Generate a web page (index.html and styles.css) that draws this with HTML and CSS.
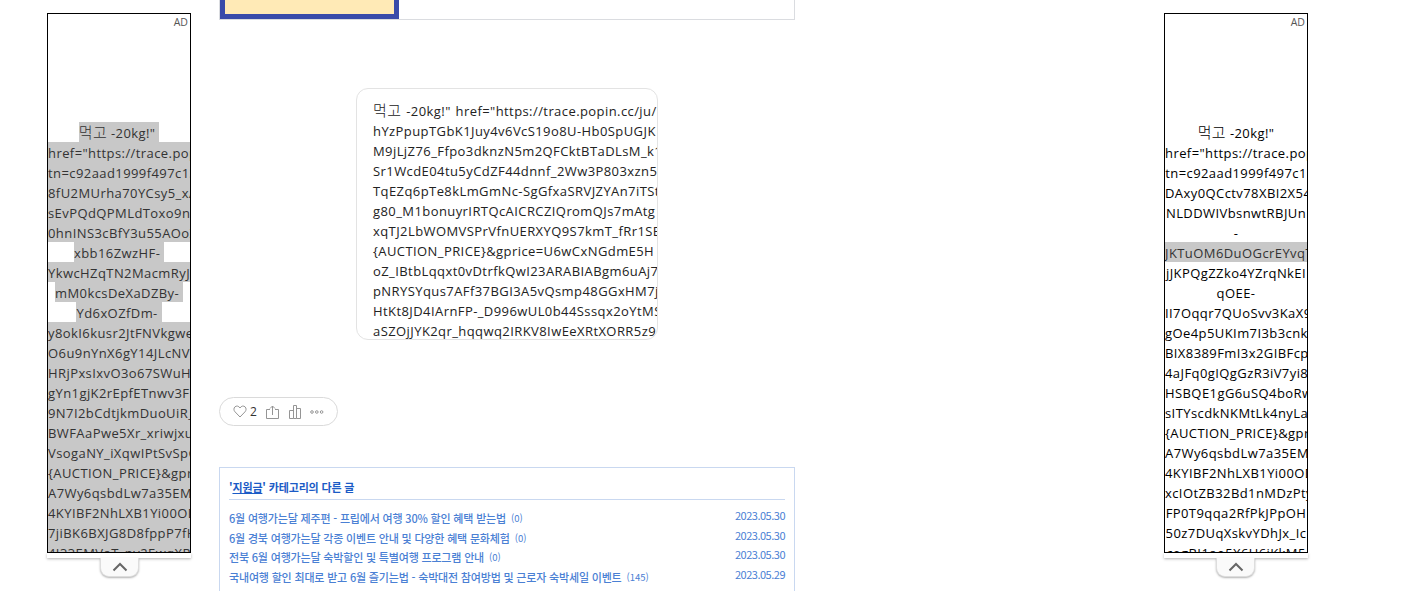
FILE: index.html
```
<!DOCTYPE html>
<html lang="ko">
<head>
  <meta charset="UTF-8">
  <meta name="viewport" content="width=device-width, initial-scale=1.0">
  <title>지원금</title>
  <link rel="stylesheet" href="styles.css">
</head>
<body>
  <div class="page">
    <aside class="side-ad">
      <div class="ad-box">
        <div class="ad-label">AD</div>
        <div class="ad-text selected">
          <p><span><i class="ko">먹고</i> -20kg!"&nbsp;</span></p>
          <p><span>href="https://trace.pop</span></p>
          <p><span>tn=c92aad1999f497c13</span></p>
          <p><span>8fU2MUrha70YCsy5_xA</span></p>
          <p><span>sEvPQdQPMLdToxo9n0</span></p>
          <p><span>0hnINS3cBfY3u55AOoZ</span></p>
          <p><span>xbb16ZwzHF-&nbsp;</span></p>
          <p><span>YkwcHZqTN2MacmRyJ</span></p>
          <p><span>mM0kcsDeXaDZBy-&nbsp;</span></p>
          <p><span>Yd6xOZfDm-&nbsp;</span></p>
          <p><span>y8okI6kusr2JtFNVkgwe</span></p>
          <p><span>O6u9nYnX6gY14JLcNVa</span></p>
          <p><span>HRjPxsIxvO3o67SWuHa</span></p>
          <p><span>gYn1gjK2rEpfETnwv3FD</span></p>
          <p><span>9N7I2bCdtjkmDuoUiR_</span></p>
          <p><span>BWFAaPwe5Xr_xriwjxui</span></p>
          <p><span>VsogaNY_iXqwIPtSvSpG</span></p>
          <p><span>{AUCTION_PRICE}&amp;gpr</span></p>
          <p><span>A7Wy6qsbdLw7a35EM</span></p>
          <p><span>4KYIBF2NhLXB1Yi00OD</span></p>
          <p><span>7jiBK6BXJG8D8fppP7fH</span></p>
          <p><span>4I33EMVaT_nv2EwqXR</span></p>
        </div>
      </div>
      <div class="ad-foot"></div>
      <button class="ad-toggle"><svg width="16" height="10" viewBox="0 0 16 10"><path d="M1.500 8.500 8 2l6.500 6.500"/></svg></button>
    </aside>

    <main class="content">
      <div class="banner"><div class="banner-img"></div></div>

      <div class="inline-ad">
        <p><i class="ko">먹고</i> -20kg!" href="https://trace.popin.cc/ju/i</p>
        <p>hYzPpupTGbK1Juy4v6VcS19o8U-Hb0SpUGJK</p>
        <p>M9jLjZ76_Ffpo3dknzN5m2QFCktBTaDLsM_k1</p>
        <p>Sr1WcdE04tu5yCdZF44dnnf_2Ww3P803xzn5z</p>
        <p>TqEZq6pTe8kLmGmNc-SgGfxaSRVJZYAn7iTSt</p>
        <p>g80_M1bonuyrIRTQcAICRCZIQromQJs7mAtg</p>
        <p>xqTJ2LbWOMVSPrVfnUERXYQ9S7kmT_fRr1SE</p>
        <p>{AUCTION_PRICE}&amp;gprice=U6wCxNGdmE5H</p>
        <p>oZ_IBtbLqqxt0vDtrfkQwI23ARABIABgm6uAj7</p>
        <p>pNRYSYqus7AFf37BGI3A5vQsmp48GGxHM7j</p>
        <p>HtKt8JD4IArnFP-_D996wUL0b44Sssqx2oYtMS</p>
        <p>aSZOjJYK2qr_hqqwq2IRKV8IwEeXRtXORR5z9</p>
      </div>

      <div class="post-btns">
        <svg width="14" height="13" viewBox="0 0 14 13"><path d="M7 12 2 6.800C.6 5.300.6 3.100 1.900 1.900 3.400.5 5.700.8 7 3c1.300-2.200 3.600-2.500 5.100-1.100 1.300 1.200 1.300 3.400-.1 4.900z"/></svg>
        <span class="like-count">2</span>
        <svg class="share" width="13" height="14" viewBox="0 0 13 14"><path d="M4 4.500H.5v9h12v-9H9M6.500 10V1M4 3.500 6.500 1 9 3.500"/></svg>
        <svg class="stats" width="12" height="14" viewBox="0 0 12 14"><path d="M4.500 13.500h-4v-8h4M4.500 13.500V.5h3v13zM7.500 3.500h4v10h-4"/></svg>
        <svg class="more" width="14" height="4" viewBox="0 0 14 4"><circle cx="2" cy="2" r="1.300"/><circle cx="6.800" cy="2" r="1.300"/><circle cx="11.600" cy="2" r="1.300"/></svg>
      </div>

      <section class="category">
        <h4>'<a href="#">지원금</a>' 카테고리의 다른 글</h4>
        <ul>
          <li><a href="#">6월 여행가는달 제주편 - 프립에서 여행 30% 할인 혜택 받는법</a><span class="count">(0)</span><span class="date">2023.05.30</span></li>
          <li><a href="#">6월 경북 여행가는달 각종 이벤트 안내 및 다양한 혜택 문화체험</a><span class="count">(0)</span><span class="date">2023.05.30</span></li>
          <li><a href="#">전북 6월 여행가는달 숙박할인 및 특별여행 프로그램 안내</a><span class="count">(0)</span><span class="date">2023.05.30</span></li>
          <li><a href="#">국내여행 할인 최대로 받고 6월 즐기는법 - 숙박대전 참여방법 및 근로자 숙박세일 이벤트</a><span class="count">(145)</span><span class="date">2023.05.29</span></li>
        </ul>
      </section>
    </main>

    <aside class="side-ad right">
      <div class="ad-box">
        <div class="ad-label">AD</div>
        <div class="ad-text">
          <p><span><i class="ko">먹고</i> -20kg!"</span></p>
          <p>href="https://trace.pop</p>
          <p>tn=c92aad1999f497c1</p>
          <p>DAxy0QCctv78XBI2X54</p>
          <p>NLDDWIVbsnwtRBJUn</p>
          <p>-</p>
          <p class="selected"><span>JKTuOM6DuOGcrEYvqT</span></p>
          <p>jJKPQgZZko4YZrqNkEI</p>
          <p>qOEE-</p>
          <p>II7Oqqr7QUoSvv3KaX9</p>
          <p>gOe4p5UKIm7I3b3cnk</p>
          <p>BIX8389FmI3x2GIBFcp0</p>
          <p>4aJFq0gIQgGzR3iV7yi8</p>
          <p>HSBQE1gG6uSQ4boRw</p>
          <p>sITYscdkNKMtLk4nyLay</p>
          <p>{AUCTION_PRICE}&amp;gpr</p>
          <p>A7Wy6qsbdLw7a35EM</p>
          <p>4KYIBF2NhLXB1Yi00OD</p>
          <p>xcIOtZB32Bd1nMDzPty</p>
          <p>FP0T9qqa2RfPkJPpOH</p>
          <p>50z7DUqXskvYDhJx_Ic</p>
          <p>cogBI1ao5X6U6jKkM5</p>
        </div>
      </div>
      <div class="ad-foot"></div>
      <button class="ad-toggle"><svg width="16" height="10" viewBox="0 0 16 10"><path d="M1.500 8.500 8 2l6.500 6.500"/></svg></button>
    </aside>
  </div>
</body>
</html>
```
FILE: styles.css
```
* {
  margin: 0;
  padding: 0;
  box-sizing: border-box;
}

body {
  font-family: "Open Sans", "Noto Sans CJK KR", sans-serif;
  background: #fff;
  color: #000;
  overflow: hidden;
}

.page {
  display: flex;
  align-items: flex-start;
  width: 1418px;
  height: 591px;
  padding-left: 47px;
  overflow: hidden;
}

/* side banners */
.side-ad {
  width: 144px;
  flex: none;
  padding-top: 13px;
}

.ad-box {
  height: 540px;
  border: 1px solid #000;
  overflow: hidden;
}

.ad-label {
  height: 108px;
  padding-right: 2px;
  font-size: 10.5px;
  line-height: 16px;
  text-align: right;
  color: #555;
}

.ad-text p,
.inline-ad p {
  height: 20px;
  font-size: 13px;
  line-height: 21px;
  letter-spacing: 0.42px;
  white-space: nowrap;
}

.ad-text p {
  display: flex;
  justify-content: safe center;
  line-height: 23px;
}

.ko {
  font-size: 15px;
  font-style: normal;
  font-weight: 300;
  line-height: 1;
}

.selected span {
  display: block;
  height: 20px;
  background: #c8c8c8;
  color: #333;
}

.ad-foot {
  height: 5px;
  background: #fff;
  box-shadow: 0 1px 3px rgba(0, 0, 0, 0.3);
}

.ad-toggle {
  display: flex;
  align-items: center;
  justify-content: center;
  width: 39px;
  height: 19px;
  margin-left: 53px;
  border: 1px solid #ddd;
  border-top: 0;
  border-radius: 0 0 9px 9px;
  background: #fafafa;
  box-shadow: 0 1px 2px rgba(0, 0, 0, 0.3);
}

.right .ad-toggle {
  margin-left: 52px;
}

.ad-toggle svg {
  fill: none;
  stroke: #666;
  stroke-width: 2;
}

/* article */
.content {
  width: 576px;
  flex: none;
  margin: 0 369px 0 28px;
}

.banner {
  height: 20px;
  border: 1px solid #dadce0;
  border-top: 0;
}

.banner-img {
  width: 179px;
  height: 19px;
  border: 5px solid #394ba9;
  border-top: 0;
  background: #ffeab6;
}

.inline-ad {
  width: 302px;
  height: 252px;
  margin: 68px 0 0 137px;
  padding: 12px 0 0 16px;
  border: 1px solid #e3e3e3;
  border-radius: 12px;
  overflow: hidden;
  color: #222;
}

.inline-ad p {
  word-spacing: 1px;
}

.post-btns {
  display: flex;
  align-items: center;
  width: 119px;
  height: 29px;
  margin-top: 57px;
  padding-left: 13px;
  border: 1px solid #dadada;
  border-radius: 15px;
}

.post-btns svg {
  fill: none;
  stroke: #959595;
}

.like-count {
  width: 16px;
  padding-left: 3px;
  font-size: 12px;
  color: #333;
}

.post-btns .share {
  margin-left: 3px;
}

.post-btns .stats {
  margin-left: 10px;
}

.post-btns .more {
  margin-left: 9px;
}

.category {
  height: 140px;
  margin-top: 41px;
  padding: 9px 9px 0 9px;
  border: 1px solid #c9d8f0;
  font-family: "Noto Sans CJK KR", sans-serif;
}

.category h4 {
  height: 23px;
  border-bottom: 1px solid #c9d8f0;
  font-size: 11px;
  line-height: 20px;
  letter-spacing: -0.15px;
  color: #1b5bc6;
}

.category h4 a {
  color: inherit;
}

.category ul {
  list-style: none;
  padding-top: 9px;
}

.category li {
  display: flex;
  height: 19.7px;
  font-size: 11px;
  line-height: 19px;
  font-weight: 500;
  letter-spacing: -0.18px;
  white-space: nowrap;
  color: #4a80d4;
}

.category li a {
  color: inherit;
  text-decoration: none;
}

.count {
  margin-left: 5px;
  font-size: 9.5px;
  font-weight: 400;
  letter-spacing: 0;
}

.date {
  margin-left: auto;
  line-height: 13px;
  font-weight: 400;
  letter-spacing: -0.5px;
}
```
